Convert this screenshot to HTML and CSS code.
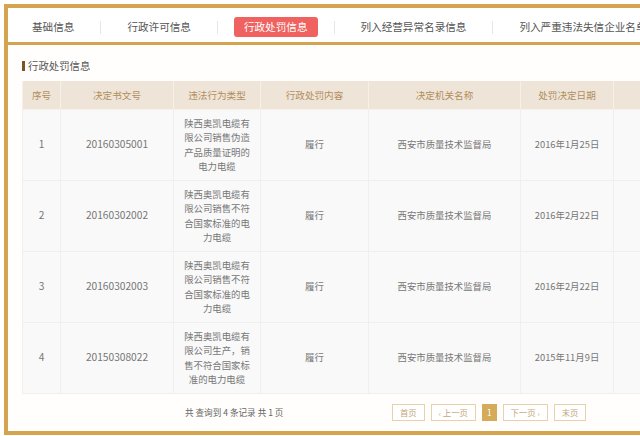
FILE: index.html
```html
<!DOCTYPE html>
<html lang="zh-CN">
<head>
  <meta charset="UTF-8" />
  <title>行政处罚信息</title>
  <link rel="stylesheet" href="styles.css">
</head>
<body>

  <div class="panel">
    <div class="tabs">
      <a class="tab">基础信息</a>
      <span class="sep"></span>
      <a class="tab">行政许可信息</a>
      <span class="sep"></span>
      <a class="tab active">行政处罚信息</a>
      <span class="sep"></span>
      <a class="tab">列入经营异常名录信息</a>
      <span class="sep"></span>
      <a class="tab">列入严重违法失信企业名单</a>
    </div>

    <div class="content">
      <h3 class="section-title">行政处罚信息</h3>

      <table class="records">
        <colgroup>
          <col class="c-no">
          <col class="c-doc">
          <col class="c-type">
          <col class="c-punish">
          <col class="c-org">
          <col class="c-date">
          <col class="c-pub">
        </colgroup>
        <thead>
          <tr>
            <th>序号</th>
            <th>决定书文号</th>
            <th>违法行为类型</th>
            <th>行政处罚内容</th>
            <th>决定机关名称</th>
            <th>处罚决定日期</th>
            <th>公示日期</th>
          </tr>
        </thead>
        <tbody>
          <tr>
            <td>1</td>
            <td>20160305001</td>
            <td>陕西奥凯电缆有限公司销售伪造产品质量证明的电力电缆</td>
            <td>履行</td>
            <td>西安市质量技术监督局</td>
            <td>2016年1月25日</td>
            <td></td>
          </tr>
          <tr>
            <td>2</td>
            <td>20160302002</td>
            <td>陕西奥凯电缆有限公司销售不符合国家标准的电力电缆</td>
            <td>履行</td>
            <td>西安市质量技术监督局</td>
            <td>2016年2月22日</td>
            <td></td>
          </tr>
          <tr>
            <td>3</td>
            <td>20160302003</td>
            <td>陕西奥凯电缆有限公司销售不符合国家标准的电力电缆</td>
            <td>履行</td>
            <td>西安市质量技术监督局</td>
            <td>2016年2月22日</td>
            <td></td>
          </tr>
          <tr>
            <td>4</td>
            <td>20150308022</td>
            <td>陕西奥凯电缆有限公司生产，销售不符合国家标准的电力电缆</td>
            <td>履行</td>
            <td>西安市质量技术监督局</td>
            <td>2015年11月9日</td>
            <td></td>
          </tr>
        </tbody>
      </table>

      <div class="pager">
        <span class="summary">共 查询到 4 条记录 共 1 页</span>
        <div class="pages">
          <a class="page-btn">首页</a>
          <a class="page-btn"><i>‹</i> 上一页</a>
          <a class="page-btn current">1</a>
          <a class="page-btn">下一页 <i>›</i></a>
          <a class="page-btn">末页</a>
        </div>
      </div>
    </div>
  </div>

</body>
</html>
```

FILE: styles.css
```css
* {
  margin: 0;
  padding: 0;
  box-sizing: border-box;
}

body {
  font-family: "Noto Sans CJK SC", "Noto Sans", sans-serif;
  background: #ffffff;
  color: #666;
  overflow: hidden;
}

/* gold framed box */
.panel {
  margin: 4px 0 0 4px;
  width: 760px;
  border: 4px solid #d5a450;
  background: #fffefc;
}

/* tab bar */
.tabs {
  display: flex;
  align-items: center;
  height: 37px;
  padding-top: 4px;
  background: #fff;
  border-bottom: 3px solid #d5a450;
  white-space: nowrap;
}

.tab {
  margin: 0 16px;
  padding: 0 10px;
  height: 20px;
  line-height: 20px;
  font-size: 10.6px;
  color: #555;
  border-radius: 3px;
  cursor: pointer;
}

.tab:first-child {
  margin-left: 14px;
}

.tab.active {
  background: #f0625f;
  color: #fff;
}

.sep {
  width: 1px;
  height: 13px;
  background: #e6e6e6;
}

/* content */
.content {
  padding: 14px 0 0 14px;
}

.section-title {
  font-size: 10.4px;
  font-weight: normal;
  line-height: 14px;
  height: 14px;
  color: #555;
  margin-bottom: 8px;
  display: flex;
  align-items: center;
}

.section-title::before {
  content: "";
  width: 3px;
  height: 10px;
  background: #7d5224;
  margin-right: 3px;
}

.records {
  border-collapse: collapse;
  table-layout: fixed;
  width: 691px;
}

.c-no { width: 38px; }
.c-doc { width: 113px; }
.c-type { width: 87px; }
.c-punish { width: 108px; }
.c-org { width: 152px; }
.c-date { width: 93px; }
.c-pub { width: 100px; }

.records th {
  height: 28px;
  background: #eee5d8;
  color: #b38d5d;
  font-size: 9.6px;
  font-weight: normal;
  border: 1px solid #f6f0e8;
  border-top: none;
}

.records td {
  height: 70.5px;
  padding: 6px 10px;
  background: #f9f9f9;
  border: 1px solid #efefef;
  text-align: center;
  font-size: 9.4px;
  line-height: 14.5px;
  color: #777;
}

.records td:nth-child(2),
.records td:first-child {
  font-size: 10.2px;
}

/* pager */
.pager {
  display: flex;
  align-items: center;
  height: 37px;
  padding-left: 163px;
}

.summary {
  font-size: 8.6px;
  color: #666;
  width: 207px;
}

.pages {
  display: flex;
  gap: 6px;
}

.page-btn {
  height: 17px;
  line-height: 15px;
  padding: 0 7px;
  border: 1px solid #e6d3ae;
  font-size: 8.4px;
  color: #c2a67c;
  background: #fff;
  cursor: pointer;
}

.page-btn i {
  font-style: normal;
  font-size: 7px;
}

.page-btn.current {
  padding: 0 4px;
  background: #d5aa58;
  border-color: #d5aa58;
  color: #fff;
}
```
